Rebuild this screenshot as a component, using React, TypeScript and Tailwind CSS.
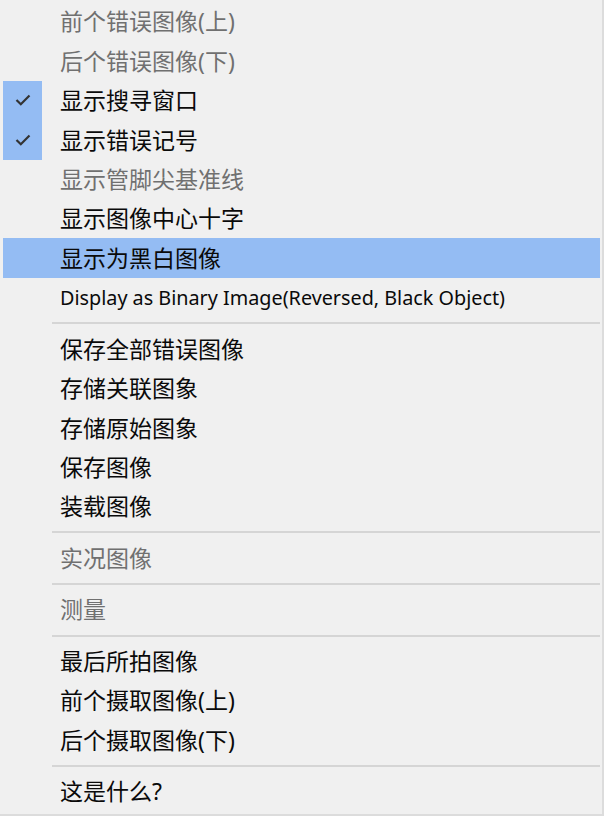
type Item =
  | { kind: "item"; label: string; disabled?: boolean; checked?: boolean; active?: boolean; latin?: boolean }
  | { kind: "sep" };

const items: Item[] = [
  { kind: "item", label: "前个错误图像(上)", disabled: true },
  { kind: "item", label: "后个错误图像(下)", disabled: true },
  { kind: "item", label: "显示搜寻窗口", checked: true },
  { kind: "item", label: "显示错误记号", checked: true },
  { kind: "item", label: "显示管脚尖基准线", disabled: true },
  { kind: "item", label: "显示图像中心十字" },
  { kind: "item", label: "显示为黑白图像", active: true },
  { kind: "item", label: "Display as Binary Image(Reversed, Black Object)", latin: true },
  { kind: "sep" },
  { kind: "item", label: "保存全部错误图像" },
  { kind: "item", label: "存储关联图象" },
  { kind: "item", label: "存储原始图象" },
  { kind: "item", label: "保存图像" },
  { kind: "item", label: "装载图像" },
  { kind: "sep" },
  { kind: "item", label: "实况图像", disabled: true },
  { kind: "sep" },
  { kind: "item", label: "测量", disabled: true },
  { kind: "sep" },
  { kind: "item", label: "最后所拍图像" },
  { kind: "item", label: "前个摄取图像(上)" },
  { kind: "item", label: "后个摄取图像(下)" },
  { kind: "sep" },
  { kind: "item", label: "这是什么?" },
];

function Check() {
  return (
    <svg width="16" height="12" viewBox="0 0 16 12" fill="none">
      <path d="M1.5 6 L5.8 10.2 L14.5 1.5" stroke="#333333" strokeWidth="2.2" />
    </svg>
  );
}

export default function App() {
  return (
    <div
      className="w-[604px] h-[816px] bg-[#f0f0f0] border-r-2 border-b-2 border-[#dcdcdc] pt-[2px] pl-[3px] pr-[2px] overflow-hidden"
      style={{ fontFamily: '"Noto Sans", "Noto Sans CJK SC", sans-serif' }}
    >
      {items.map((it, i) => {
        if (it.kind === "sep") {
          return (
            <div key={i} className="h-[12.2px] flex items-center pl-[49px]">
              <div className="h-[2px] w-full bg-[#d5d5d5]" />
            </div>
          );
        }
        return (
          <div
            key={i}
            className={`h-[39.4px] flex items-center ${it.active ? "bg-[#94bcf3]" : ""}`}
          >
            <div
              className={`w-[39px] h-full flex items-center justify-center ${it.checked ? "bg-[#94bcf3]" : ""}`}
            >
              {it.checked && <Check />}
            </div>
            <span
              className={`pl-[18px] whitespace-nowrap ${it.latin ? "text-[19.8px]" : "text-[23px]"} ${
                it.disabled ? "text-[#707070]" : "text-[#0a0a0a]"
              }`}
            >
              {it.label}
            </span>
          </div>
        );
      })}
    </div>
  );
}
